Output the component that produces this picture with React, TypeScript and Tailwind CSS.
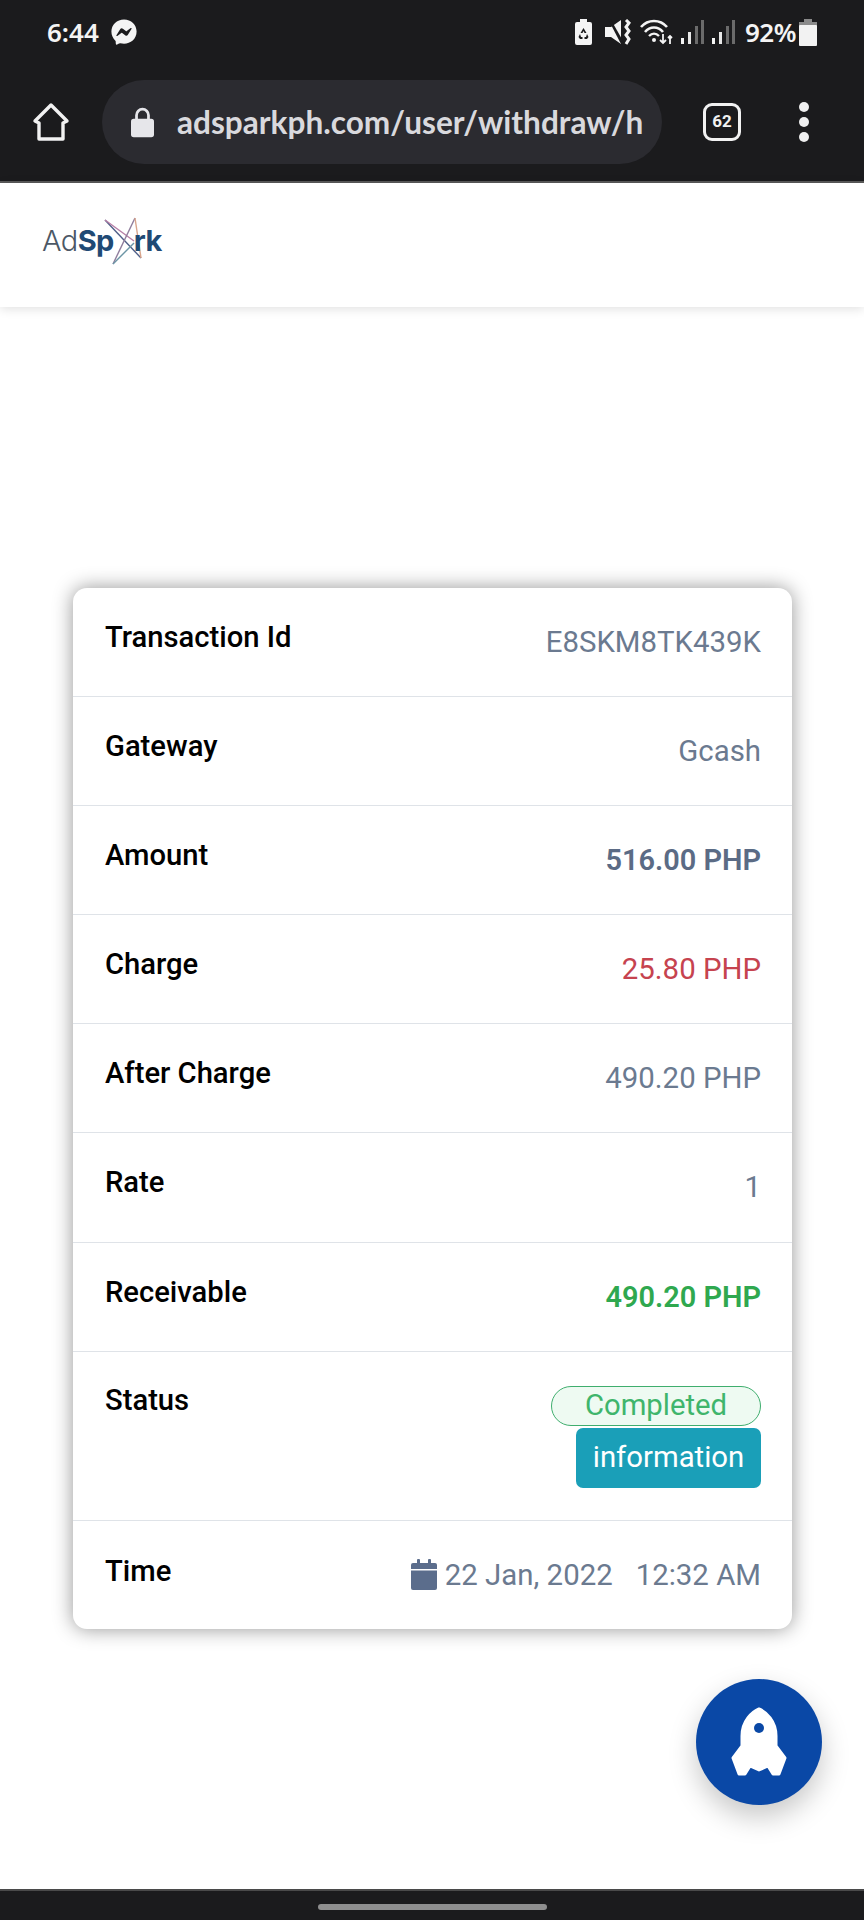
import { FaFacebookMessenger } from "react-icons/fa"

const rows = [
  { label: "Transaction Id", value: "E8SKM8TK439K", tone: "text-[#6b7a90] text-[29.4px]" },
  { label: "Gateway", value: "Gcash", tone: "text-[#6b7a90] text-[29.4px]" },
  { label: "Amount", value: "516.00 PHP", tone: "text-[#5b6b85] text-[28.9px] font-semibold" },
  { label: "Charge", value: "25.80 PHP", tone: "text-[#c6434f] text-[29.4px]" },
  { label: "After Charge", value: "490.20 PHP", tone: "text-[#6b7a90] text-[29.4px]" },
  { label: "Rate", value: "1", tone: "text-[#6b7a90] text-[29.4px]" },
  { label: "Receivable", value: "490.20 PHP", tone: "text-[#2fa84f] text-[28.9px] font-semibold" },
]

function Row({ label, value, tone }: { label: string; value: string; tone: string }) {
  return (
    <div className="flex h-[109.1px] items-start justify-between border-b border-[#dfe3e8] pl-[32px] pr-[31px]">
      <span className="pt-[29px] text-[29.2px] leading-[40px] font-medium text-black">{label}</span>
      <span className={`pt-[34px] leading-[40px] ${tone}`}>{value}</span>
    </div>
  )
}

function HomeIcon() {
  return (
    <svg width="40" height="40" viewBox="0 0 40 40" fill="none" stroke="#f2f2f2" strokeWidth="3.4" strokeLinejoin="round">
      <path d="M20 3 L36 19 L32 21 L32 37 L8 37 L8 21 L4 19 Z" />
    </svg>
  )
}

function StatusIcons() {
  return (
    <div className="flex items-center">
      {/* battery saver */}
      <svg width="17" height="26" viewBox="0 0 17 26">
        <path d="M5 0h7v3h3a2 2 0 0 1 2 2v19a2 2 0 0 1-2 2H2a2 2 0 0 1-2-2V5a2 2 0 0 1 2-2h3z" fill="#f4f4f4" />
        <path d="M8.5 9l3 5h-2l-1-2-1 2h-2zM5 15l-1.5 3 1.5 2h2.5v-2H6zM12 15l1.5 3-1.5 2H9.5v-2H11z" fill="#1b1b1d" />
      </svg>
      {/* vibrate / mute */}
      <svg width="26" height="26" viewBox="0 0 26 26" className="ml-[13px]" fill="#f4f4f4">
        <path d="M0 8h6l10-7v24l-10-7H0z" />
        <path d="M3 0l2-1 13 23-2 3z" fill="#1b1b1d" />
        <path d="M21 1l3 3-3 4 3 4-3 4 3 4-3 5" fill="none" stroke="#f4f4f4" strokeWidth="3" />
      </svg>
      {/* wifi */}
      <svg width="33" height="26" viewBox="0 0 33 26" className="ml-[9px]" fill="none" stroke="#f4f4f4">
        <path d="M1 8 C8 0 20 0 27 8" strokeWidth="2.6" />
        <path d="M5 13 C10 7 18 7 23 13" strokeWidth="2.6" />
        <path d="M9 17 C12 14 16 14 19 17" strokeWidth="2.4" />
        <circle cx="14" cy="21" r="2" fill="#f4f4f4" stroke="none" />
        <path d="M23 15v9M20 21l3 3 3-3M30 25v-8M28 19l2-2 2 2" strokeWidth="1.8" />
      </svg>
      {/* signal bars */}
      <svg width="56" height="26" viewBox="0 0 56 26" className="ml-[7px]">
        <rect x="1" y="19" width="3" height="6" fill="#f4f4f4" />
        <rect x="8" y="13" width="3" height="12" fill="#e8e8e8" />
        <rect x="15" y="7" width="3" height="18" fill="#6b6b6b" />
        <rect x="21" y="1" width="3" height="24" fill="#6b6b6b" />
        <rect x="32" y="19" width="3" height="6" fill="#f4f4f4" />
        <rect x="39" y="13" width="3" height="12" fill="#e8e8e8" />
        <rect x="46" y="7" width="3" height="18" fill="#6b6b6b" />
        <rect x="52" y="1" width="3" height="24" fill="#6b6b6b" />
      </svg>
      <span className="ml-[9px] font-['Noto_Sans'] text-[26px] leading-[30px] font-semibold tracking-[-0.5px] text-[#f4f4f4]">92%</span>
      <svg width="18" height="27" viewBox="0 0 18 27" className="ml-[3px]">
        <rect x="5" y="0" width="8" height="3" fill="#8a8a8a" />
        <rect x="0" y="3" width="18" height="5" fill="#8a8a8a" />
        <rect x="0" y="6" width="18" height="21" rx="1" fill="#f2f2f2" />
      </svg>
    </div>
  )
}

function Logo() {
  return (
    <div className="flex items-center pb-[8px] pl-[42px] font-['Inter'] text-[29px] leading-[36px] tracking-[-0.6px]">
      <span className="font-light text-[#4c5866]">Ad</span>
      <span className="font-bold text-[#1f4a75]">Sp</span>
      <svg width="40" height="50" viewBox="0 0 40 50" fill="none" strokeWidth="1.4" className="-mx-[10px] mt-[2px]">
        <path d="M1 3 L37 41" stroke="#4f5f88" />
        <path d="M1 3 L30 24" stroke="#b77fa6" />
        <path d="M31 1 L9 47" stroke="#8f7d9c" />
        <path d="M31 1 L37 41" stroke="#d9a58c" />
        <path d="M9 47 L30 26" stroke="#6c95a6" />
      </svg>
      <span className="font-bold text-[#1f4a75]">rk</span>
    </div>
  )
}

function Rocket() {
  return (
    <svg width="56" height="70" viewBox="0 0 56 70">
      <path
        d="M28 2 C35 5 45 14 45 29 L45 39 L54 51 L48 67 L42 67 L37 59 L28 63 L19 59 L14 67 L8 67 L2 51 L11 39 L11 29 C11 14 21 5 28 2 Z"
        fill="#ffffff"
        stroke="#ffffff"
        strokeWidth="3"
        strokeLinejoin="round"
      />
      <circle cx="28" cy="21" r="5" fill="#0a48a6" />
    </svg>
  )
}

function CalendarIcon() {
  return (
    <svg width="26" height="31" viewBox="0 0 26 31" fill="#5b6d8c">
      <rect x="6" y="0" width="3" height="6" rx="1" />
      <rect x="17" y="0" width="3" height="6" rx="1" />
      <path d="M2 4h22a2 2 0 0 1 2 2v4H0V6a2 2 0 0 1 2-2z" />
      <path d="M0 11.5h26V29a2 2 0 0 1-2 2H2a2 2 0 0 1-2-2z" />
    </svg>
  )
}

export default function App() {
  return (
    <div className="relative flex h-[1920px] w-[864px] flex-col overflow-hidden bg-white font-['Roboto',sans-serif]">
      {/* Phone chrome */}
      <div className="h-[183px] shrink-0 border-b-2 border-[#5a5a5a] bg-[#1b1b1d]">
        <div className="flex h-[62px] items-center justify-between px-[47px] pt-[2px]">
          <div className="flex items-center">
            <span className="font-['Noto_Sans'] text-[26px] leading-[30px] font-semibold text-[#f4f4f4]">6:44</span>
            <FaFacebookMessenger className="ml-[12px] text-[26px] text-[#f4f4f4]" />
          </div>
          <StatusIcons />
        </div>
        <div className="mt-[18px] flex items-center pl-[31px]">
          <HomeIcon />
          <div className="ml-[31px] flex h-[84px] w-[560px] items-center overflow-hidden rounded-full bg-[#2b2b30] pl-[29px]">
            <svg width="23" height="31" viewBox="0 0 25 32" fill="#e6e6ea">
              <path d="M6 13V8a6.5 6.5 0 0 1 13 0v5" fill="none" stroke="#e6e6ea" strokeWidth="3" />
              <rect x="0" y="12" width="25" height="20" rx="3" />
            </svg>
            <span className="ml-[23px] font-['Lato'] text-[31.6px] leading-[40px] font-bold whitespace-nowrap text-[#d9d9dd]">
              adsparkph.com/user/withdraw/h
            </span>
          </div>
          <div className="ml-[41px] flex h-[38px] w-[38px] items-center justify-center rounded-[9px] border-[3px] border-[#f2f2f2] text-[17px] font-bold text-[#f2f2f2]">
            62
          </div>
          <div className="ml-[58px] flex flex-col gap-[5px]">
            <span className="h-[10px] w-[10px] rounded-full bg-[#efefef]" />
            <span className="h-[10px] w-[10px] rounded-full bg-[#efefef]" />
            <span className="h-[10px] w-[10px] rounded-full bg-[#efefef]" />
          </div>
        </div>
      </div>

      {/* Site header */}
      <div className="flex h-[124px] shrink-0 items-center bg-white shadow-[0_2px_10px_rgba(0,0,0,0.12)]">
        <Logo />
      </div>

      <div className="flex-1 pl-[73px] pt-[281px]">
        <div className="w-[719px] overflow-hidden rounded-[14px] bg-white shadow-[0_0_20px_rgba(0,0,0,0.42)]">
          {rows.map((row) => (
            <Row key={row.label} {...row} />
          ))}

          <div className="flex h-[169px] items-start justify-between border-b border-[#dfe3e8] pl-[32px] pr-[31px]">
            <span className="pt-[28px] text-[29.2px] leading-[40px] font-medium text-black">Status</span>
            <div className="flex flex-col items-end pt-[34px]">
              <span className="flex h-[40px] w-[210px] items-center justify-center rounded-full border border-[#3fae6e] bg-[#eefaf2] text-[29.3px] text-[#3fb56c]">
                Completed
              </span>
              <span className="mt-[2px] flex h-[60px] w-[185px] items-center justify-center rounded-[7px] bg-[#1a9fb8] text-[29.3px] text-white">
                information
              </span>
            </div>
          </div>

          <div className="flex h-[108px] items-start justify-between pl-[32px] pr-[31px]">
            <span className="pt-[30px] text-[29.2px] leading-[40px] font-medium text-black">Time</span>
            <div className="flex items-center pt-[34px] text-[29.4px] leading-[40px] text-[#6b7a90]">
              <CalendarIcon />
              <span className="ml-[8px]">22 Jan, 2022</span>
              <span className="ml-[23px]">12:32 AM</span>
            </div>
          </div>
        </div>
      </div>

      {/* Floating action button */}
      <div className="absolute top-[1679px] left-[696px] flex h-[126px] w-[126px] items-center justify-center rounded-full bg-[#0a48a6] shadow-[0_12px_28px_rgba(0,0,0,0.22)]">
        <Rocket />
      </div>

      {/* Android nav bar */}
      <div className="flex h-[31px] shrink-0 items-center justify-center border-t-2 border-[#4a4a4a] bg-[#1b1b1d]">
        <span className="mt-[2px] h-[6px] w-[229px] rounded-full bg-[#8e8e8e]" />
      </div>
    </div>
  )
}
